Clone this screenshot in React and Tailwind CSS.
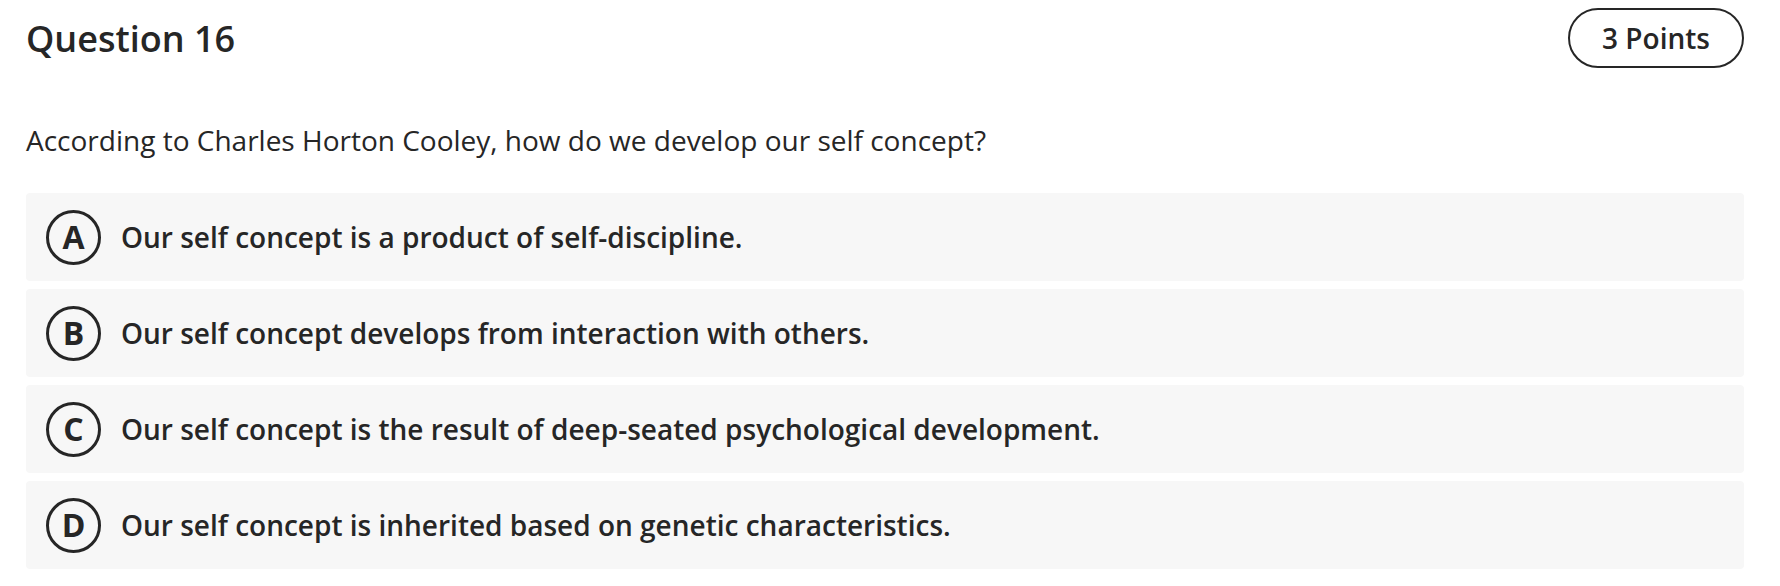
const options = [
  { letter: "A", text: "Our self concept is a product of self-discipline." },
  { letter: "B", text: "Our self concept develops from interaction with others." },
  { letter: "C", text: "Our self concept is the result of deep-seated psychological development." },
  { letter: "D", text: "Our self concept is inherited based on genetic characteristics." },
];

const App = () => {
  return (
    <div className="min-h-[586px] bg-white pl-[26px] pr-[36px] pt-[8px] font-['Open_Sans',sans-serif] text-[#262626]">
      <div className="flex items-start justify-between">
        <h1 className="mt-[6px] text-[36px] font-semibold leading-[50px]">Question 16</h1>
        <span className="flex h-[60px] w-[176px] items-center justify-center rounded-full border-2 border-[#262626] text-[28px] font-semibold">
          3 Points
        </span>
      </div>

      <p className="mt-[52px] text-[28px] leading-[40px]">
        According to Charles Horton Cooley, how do we develop our self concept?
      </p>

      <div className="mt-[33px] flex flex-col gap-[8px]">
        {options.map((option) => (
          <div
            key={option.letter}
            className="flex h-[88px] items-center gap-[20px] rounded-[4px] bg-[#f7f7f7] px-[20px]"
          >
            <span className="flex h-[55px] w-[55px] shrink-0 items-center justify-center rounded-full border-[3.5px] border-[#262626] text-[32px] font-bold leading-none">
              {option.letter}
            </span>
            <span className="text-[28px] font-semibold">{option.text}</span>
          </div>
        ))}
      </div>
    </div>
  );
};

export default App;
